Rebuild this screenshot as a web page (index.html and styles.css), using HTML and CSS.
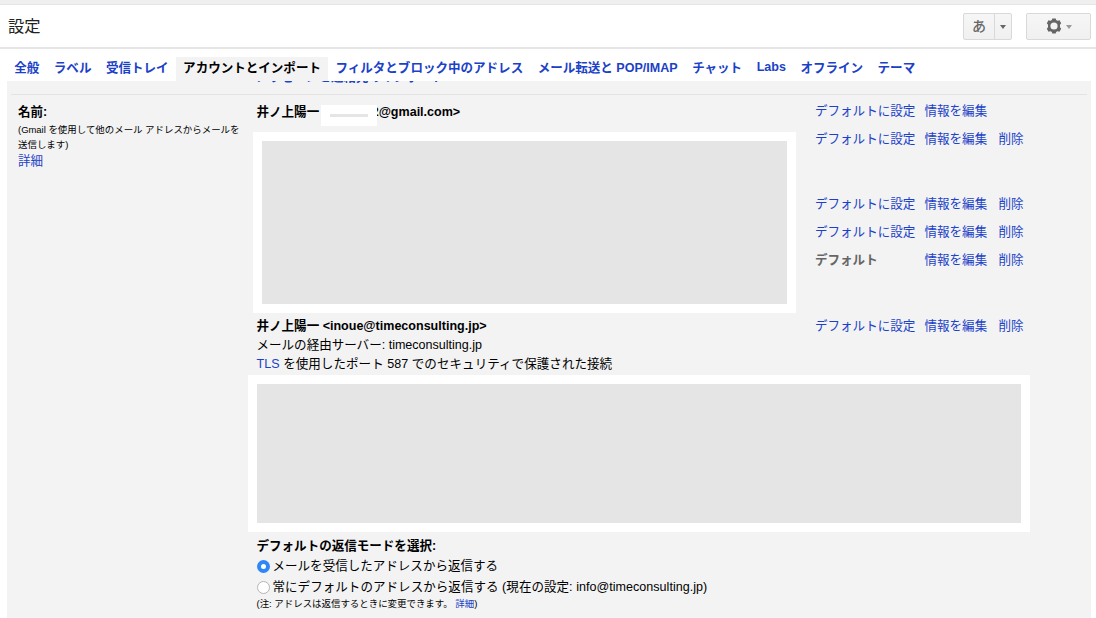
FILE: index.html
```html
<!DOCTYPE html>
<html lang="ja">
<head>
<meta charset="utf-8">
<title>設定</title>
<link rel="stylesheet" href="styles.css">
</head>
<body>
<div class="topstrip"></div>
<header class="header">
  <h1 class="title">設定</h1>
  <div class="tools">
    <div class="btn ime"><span class="kana">あ</span><span class="drop"><i class="caret"></i></span></div>
    <div class="btn gearbtn">
      <svg class="gear" viewBox="0 0 16 16" width="16" height="16"><path fill="#666" fill-rule="evenodd" d="M6.3 .4h3.4l.5 1.7 1.2.6 2.1-.5 1.7 3-1.2 1.6v2.4l1.2 1.6-1.7 3-2.1-.5-1.2.6-.5 1.7H6.3l-.5-1.7-1.2-.6-2.1.5-1.7-3L2 9.2V6.8L.8 5.2l1.7-3 2.1.5 1.2-.6zM8 4.4a3.6 3.6 0 1 0 0 7.2 3.6 3.6 0 0 0 0-7.2z"/></svg>
      <i class="caret light"></i>
    </div>
  </div>
</header>
<nav class="tabs">
  <a class="tab">全般</a>
  <a class="tab">ラベル</a>
  <a class="tab">受信トレイ</a>
  <a class="tab active">アカウントとインポート</a>
  <a class="tab">フィルタとブロック中のアドレス</a>
  <a class="tab">メール転送と POP/IMAP</a>
  <a class="tab">チャット</a>
  <a class="tab latin">Labs</a>
  <a class="tab">オフライン</a>
  <a class="tab">テーマ</a>
</nav>
<main class="panel">
  <div class="previous"><a class="import">メッセージと連絡先のインポート</a></div>
  <div class="section">
    <div class="label">
      <b class="line">名前:</b>
      <p class="hint">(Gmail を使用して他のメール アドレスからメールを送信します)</p>
      <a class="line more">詳細</a>
    </div>
    <div class="content">
      <div class="senders">
        <div class="identities">
          <div class="line bold owner"><span>井ノ上陽一</span><span class="mask"><i></i></span><span class="mail">2@gmail.com&gt;</span></div>
          <div class="block first"></div>
          <div class="line bold">井ノ上陽一 &lt;inoue@timeconsulting.jp&gt;</div>
          <div class="line">メールの経由サーバー: timeconsulting.jp</div>
          <div class="line tls"><a>TLS</a> を使用したポート 587 でのセキュリティで保護された接続</div>
        </div>
        <div class="actions">
          <a>デフォルトに設定</a><a>情報を編集</a><span></span>
          <a>デフォルトに設定</a><a>情報を編集</a><a>削除</a>
          <a>デフォルトに設定</a><a>情報を編集</a><a>削除</a>
          <a>デフォルトに設定</a><a>情報を編集</a><a>削除</a>
          <b class="default">デフォルト</b><a>情報を編集</a><a>削除</a>
          <a>デフォルトに設定</a><a>情報を編集</a><a>削除</a>
        </div>
      </div>
      <div class="block second"></div>
      <div class="reply">
        <div class="line bold">デフォルトの返信モードを選択:</div>
        <label class="option"><span class="radio on"></span><span class="text">メールを受信したアドレスから返信する</span></label>
        <label class="option"><span class="radio"></span><span class="text last">常にデフォルトのアドレスから返信する (現在の設定: info@timeconsulting.jp)</span></label>
        <div class="note">(注: アドレスは返信するときに変更できます。 <a>詳細</a>)</div>
      </div>
    </div>
  </div>
</main>
</body>
</html>
```
FILE: styles.css
```css
* { box-sizing: border-box; }
body {
  margin: 0;
  width: 1096px;
  height: 618px;
  overflow: hidden;
  background: #fff;
  color: #000;
  font: 12.54px/19px "Liberation Sans", "Noto Sans CJK JP", sans-serif;
  white-space: nowrap;
}
a { color: #1a41c8; }
.topstrip { height: 5px; background: #efefef; border-bottom: 1px solid #e5e5e5; }
.header {
  height: 44px;
  display: flex;
  justify-content: space-between;
  padding: 8px 5px 0 8px;
  border-bottom: 2px solid #e6e6e6;
}
.title { margin: 0; font-size: 16.3px; line-height: 26px; font-weight: 400; color: #222; }
.tools { display: flex; gap: 14px; }
.btn {
  height: 27px;
  display: flex;
  align-items: center;
  border: 1px solid #d9d9d9;
  border-radius: 2px;
  background: linear-gradient(#f6f6f6, #f0f0f0);
}
.ime { width: 49px; }
.kana { width: 30px; text-align: center; font-size: 14px; font-weight: 500; color: #666; line-height: 25px; }
.drop { height: 25px; flex: 1; display: flex; align-items: center; justify-content: center; border-left: 1px solid #d9d9d9; }
.caret { border: 3.5px solid transparent; border-top: 4px solid #666; border-bottom: 0; }
.caret.light { border-top-color: #999; }
.gear { margin-top: -2px; }
.gearbtn { width: 65px; justify-content: center; gap: 4px; padding-left: 1px; }
.tabs { height: 32px; display: flex; padding: 8px 0 0 7px; }
.tab { height: 24px; padding: 0 7.26px; line-height: 23px; font-weight: 700; }
.tab.active { color: #000; background: #f3f3f3; }
.tab.latin { line-height: 20px; }
.panel { height: 537px; margin: 0 5px 0 7px; background: #f3f3f3; }
.previous { height: 14px; margin: 0 4px; border-bottom: 1px solid #e3e3e3; overflow: hidden; }
.import { display: block; margin: -13px 0 0 245px; line-height: 19px; font-weight: 700; }
.section { display: grid; grid-template-columns: 222px 1fr; column-gap: 16.5px; padding: 8px 0 0 11px; }
.line { display: block; height: 19px; line-height: 19px; }
.bold { font-weight: 700; }
.hint { margin: 0; font-size: 9.45px; line-height: 15px; white-space: normal; word-break: break-all; }
.senders { display: flex; height: 272px; }
.identities { width: 558.5px; }
.owner { display: flex; }
.mask { position: relative; z-index: 1; width: 56px; height: 21px; margin: 2px 0 0 2px; padding: 9px 9px; background: #fff; }
.mask i { display: block; height: 3px; background: #e5e5e5; }
.mail { margin-left: -5.5px; }
.block { background: #e5e5e5; border: 9px solid #fff; }
.first { width: 543px; height: 181px; margin: 10px 0 4px -3.5px; }
.second { width: 782px; height: 157px; margin: 0 0 5px -8.5px; }
.tls { letter-spacing: .04px; }
.last { letter-spacing: .03px; }
.actions {
  display: grid;
  grid-template-columns: 109.5px 74px auto;
  grid-template-rows: 28px 65px 28px 28px 66px 19px;
  align-content: start;
  margin-top: -1px;
}
.default { color: #666; }
.option { display: flex; align-items: center; height: 21px; gap: 3px; }
.radio { width: 13px; height: 13px; margin-top: 0; border: 1px solid #b5b5b5; border-radius: 50%; background: #fff; }
.radio.on { border: 4.5px solid #2f86f6; }
.note { font-size: 9.45px; line-height: 14px; margin-top: -1px; }
```
